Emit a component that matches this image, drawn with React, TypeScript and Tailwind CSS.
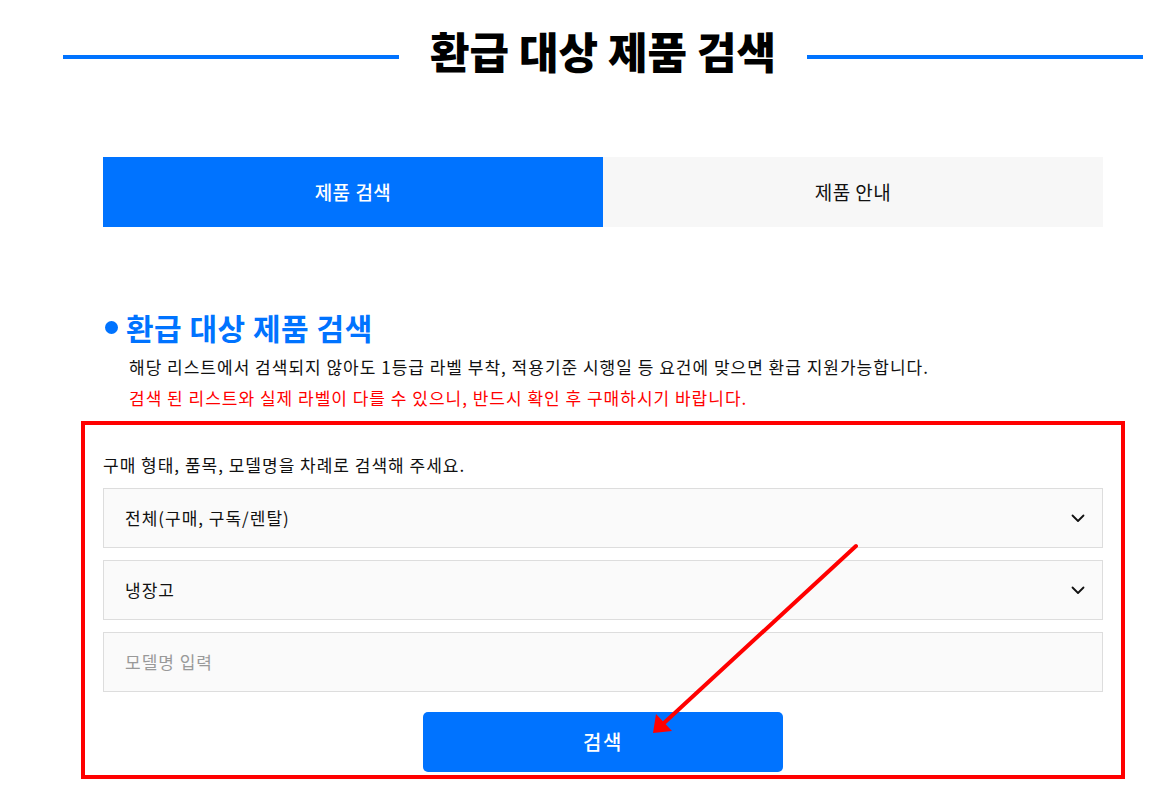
import React from "react";

const font = { fontFamily: '"Noto Sans CJK KR", "Noto Sans", sans-serif' };

function Chevron() {
  return (
    <svg width="14" height="9" viewBox="0 0 14 9" fill="none">
      <path d="M1.5 1.5 L7 7 L12.5 1.5" stroke="#111" strokeWidth="1.8" strokeLinecap="round" strokeLinejoin="round" />
    </svg>
  );
}

export default function App() {
  return (
    <div className="relative w-[1172px] h-[790px] bg-white overflow-hidden" style={font}>
      <div className="w-[1080px] ml-[63px]">
        <div className="flex pt-[20px] gap-[31px]">
          <div className="flex-1 h-[4px] bg-[#0073ff] mt-[35px]" />
          <h1 className="text-[43px] leading-[60px] font-black text-black tracking-[0px]">환급 대상 제품 검색</h1>
          <div className="flex-1 h-[4px] bg-[#0073ff] mt-[35px]" />
        </div>

        <div className="w-[1000px] mx-auto">
          <div className="mt-[77px] flex h-[70px] text-[19px] tracking-[0.5px]">
            <div className="flex-1 bg-[#0073ff] text-white flex items-center justify-center font-medium">제품 검색</div>
            <div className="flex-1 bg-[#f7f7f7] text-[#111] flex items-center justify-center">제품 안내</div>
          </div>

          <div className="mt-[80px] flex items-center h-[40px]">
            <span className="ml-[2px] w-[13px] h-[13px] rounded-full bg-[#0073ff]" />
            <h2 className="ml-[8px] text-[30px] leading-[40px] font-bold text-[#0073ff] tracking-[0.5px]">환급 대상 제품 검색</h2>
          </div>
          <div className="mt-[4px] pl-[26px] text-[17px] leading-[31px] tracking-[1px]">
            <p className="text-[#111]">해당 리스트에서 검색되지 않아도 1등급 라벨 부착, 적용기준 시행일 등 요건에 맞으면 환급 지원가능합니다.</p>
            <p className="text-[#ff0000]">검색 된 리스트와 실제 라벨이 다를 수 있으니, 반드시 확인 후 구매하시기 바랍니다.</p>
          </div>

          <div className="mt-[8px] -mx-[22px] border-4 border-[#ff0000] px-[18px] pt-[28px] pb-[3px] text-[17px] tracking-[1px]">
            <p className="leading-[24px] text-[#111]">구매 형태, 품목, 모델명을 차례로 검색해 주세요.</p>
            <div className="mt-[11px] flex flex-col gap-[12px]">
              <div className="h-[60px] bg-[#fafafa] border border-[#dddddd] flex items-center justify-between pl-[21px] pr-[17px] text-[#111]">
                <span>전체(구매, 구독/렌탈)</span>
                <Chevron />
              </div>
              <div className="h-[60px] bg-[#fafafa] border border-[#dddddd] flex items-center justify-between pl-[21px] pr-[17px] text-[#111]">
                <span>냉장고</span>
                <Chevron />
              </div>
              <div className="h-[60px] bg-[#fafafa] border border-[#dddddd] flex items-center pl-[21px] text-[#999]">
                <span>모델명 입력</span>
              </div>
            </div>
            <div className="mt-[20px] flex justify-center">
              <button className="w-[360px] h-[60px] rounded-[5px] bg-[#0073ff] text-white text-[20px] tracking-[1.5px] font-medium">검색</button>
            </div>
          </div>
        </div>
      </div>

      <svg className="absolute inset-0 pointer-events-none" width="1172" height="790" viewBox="0 0 1172 790">
        <line x1="856" y1="546" x2="664" y2="723" stroke="#ff0000" strokeWidth="4" strokeLinecap="round" />
        <polygon points="653,733 656,714 672,731" fill="#ff0000" />
      </svg>
    </div>
  );
}
